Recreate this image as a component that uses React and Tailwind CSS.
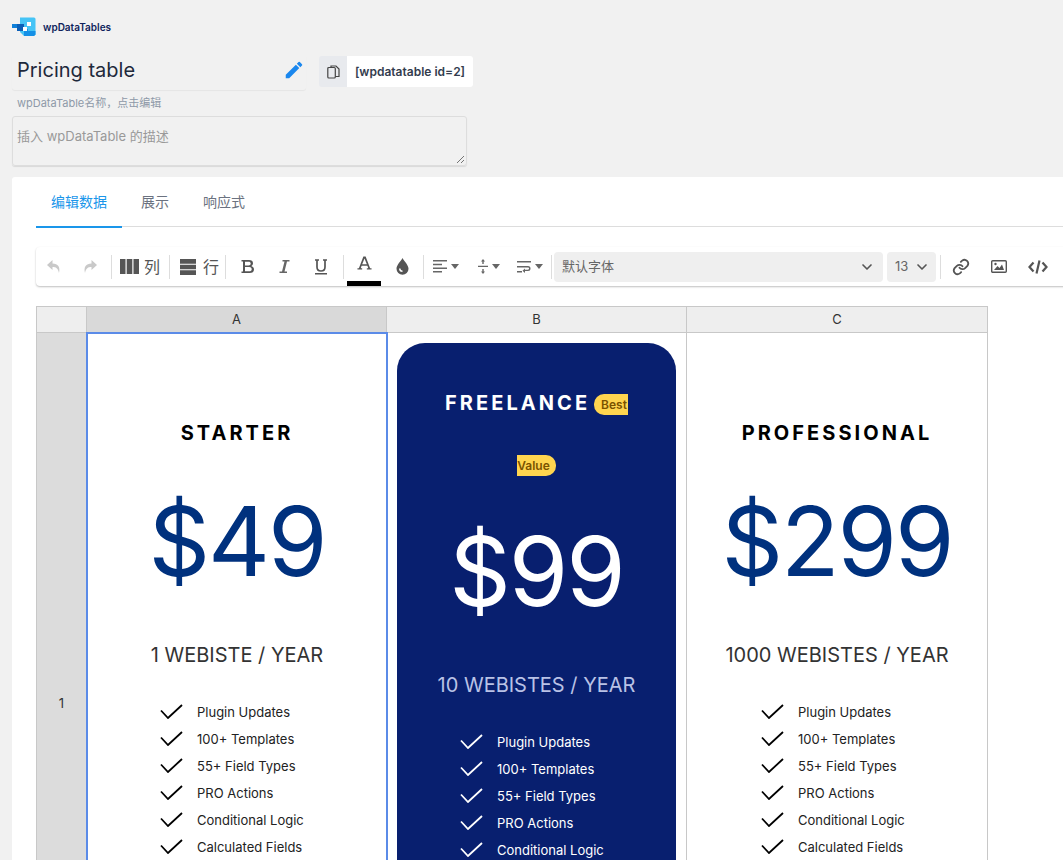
import { ChevronDown } from "lucide-react"
import { MdEdit } from "react-icons/md"

const features = ["Plugin Updates", "100+ Templates", "55+ Field Types", "PRO Actions", "Conditional Logic", "Calculated Fields"]

function Logo() {
  return (
    <svg width="24" height="20" viewBox="0 0 24 20">
      <path d="M9 0.500h13a1.500 1.500 0 0 1 1.500 1.500V17.500l-1.500 1.500H12L8 15V0.500z" fill="#45c4f6" />
      <path d="M12 12h4v2h7.500v3.500L22 19H12z" fill="#1590e6" />
      <rect x="0" y="7" width="10" height="4" fill="#0f7fd8" />
      <rect x="5" y="7" width="7" height="7" fill="#0b5fb8" />
      <rect x="15" y="5" width="4" height="4" fill="#fff" />
      <rect x="11" y="10" width="4" height="4" fill="#fff" />
    </svg>
  )
}

function Sep() {
  return <div className="w-px h-[24px] bg-[#dddddd] shrink-0" />
}

function Caret() {
  return <svg width="8" height="5" viewBox="0 0 8 5" className="ml-[4px]"><path d="M0 0h8L4 5z" fill="#666" /></svg>
}

function Toolbar() {
  return (
    <div className="h-[39px] flex items-center rounded-[4px] bg-white shadow-[0_1px_2px_rgba(0,0,0,0.25)] text-[#555] w-[1040px]">
      <button className="w-[35px] flex justify-center">
        <svg width="16" height="15" viewBox="0 0 16 15"><path d="M6.500 1 1 6l5.500 5V8c3.500 0 5.500 1 6.500 6 1.500-6-1-9.500-6.500-9.500z" fill="#c9c9c9" /></svg>
      </button>
      <button className="w-[37px] mr-[3px] flex justify-center">
        <svg width="16" height="15" viewBox="0 0 16 15"><path d="M9.500 1 15 6l-5.500 5V8C6 8 4 9 3 14 1.500 8 4 4.500 9.500 4.500z" fill="#c9c9c9" /></svg>
      </button>
      <Sep />
      <div className="flex items-center w-[57px] pl-[8px] gap-[5px]">
        <svg width="19" height="15" viewBox="0 0 19 15"><path d="M0 0h5.500v15H0zM6.700 0h5.600v15H6.700zM13.500 0H19v15h-5.500z" fill="#555" /></svg>
        <span className="text-[16px]">列</span>
      </div>
      <Sep />
      <div className="flex items-center w-[55px] pl-[10px] gap-[7px]">
        <svg width="16" height="16" viewBox="0 0 16 16"><path d="M0 0h16v4.800H0zM0 5.700h16v4.600H0zM0 11.200h16V16H0z" fill="#555" /></svg>
        <span className="text-[16px]">行</span>
      </div>
      <Sep />
      <div className="w-[43px] flex justify-center">
        <svg width="14" height="15" viewBox="0 0 14 15"><path fillRule="evenodd" d="M.5 1H8c2.500 0 4 1.200 4 3.200 0 1.400-.8 2.400-1.900 2.900 1.600.4 2.900 1.500 2.900 3.300 0 2.300-1.700 3.600-4.300 3.600H.5v-1.500H2v-10H.5zm3.500 1.700v3.700h3.500c1.300 0 2.200-.7 2.200-1.900S8.800 2.700 7.500 2.700zM4 8v4.300h4.200c1.500 0 2.500-.8 2.500-2.100S9.700 8 8.200 8z" fill="#555" /></svg>
      </div>
      <div className="w-[30px] flex justify-center">
        <svg width="12" height="15" viewBox="0 0 12 15"><path d="M4.500 1H11.500v1.500H9L6.500 12.500H9V14H1.500v-1.500H4L6.500 2.500H4.500z" fill="#666" /></svg>
      </div>
      <div className="w-[44px] flex justify-center">
        <svg width="14" height="16" viewBox="0 0 14 16"><path d="M3 1v7c0 2.400 1.600 4 4 4s4-1.600 4-4V1M1 1h4M9 1h4" stroke="#555" strokeWidth="1.700" fill="none" /><rect x="1" y="14" width="12" height="1.500" fill="#555" /></svg>
      </div>
      <Sep />
      <div className="relative w-[41px] h-full flex justify-center pt-[8px]">
        <svg width="15" height="16" viewBox="0 0 16 16"><path d="M.5 15v-1.500H2L6.800 1h2.400L14 13.500h1.500V15h-5v-1.500H12l-.9-2.500H4.900L4 13.500h1.500V15zM5.500 9.300h5L8 3.200z" fill="#555" /></svg>
        <div className="absolute left-[3px] bottom-0 w-[34px] h-[5px] bg-black" />
      </div>
      <div className="w-[35px] flex justify-center">
        <svg width="13" height="17" viewBox="0 0 13 17"><path d="M6.500 0C8 3 12.500 7 12.500 10.700a6 6 0 0 1-12 0C.5 7 5 3 6.500 0z" fill="#555" /><path d="M3 10.500a3.500 3.500 0 0 0 3.500 3.500v-1.500A2 2 0 0 1 4.500 10.500z" fill="#fff" /></svg>
      </div>
      <div className="ml-[3px]"><Sep /></div>
      <div className="w-[44px] flex items-center justify-center">
        <svg width="14" height="13" viewBox="0 0 14 13"><path d="M0 0h14v1.500H0zM0 3.700h9v1.500H0zM0 7.400h14v1.500H0zM0 11.100h9v1.500H0z" fill="#666" /></svg>
        <Caret />
      </div>
      <div className="w-[41px] flex items-center justify-center">
        <svg width="10" height="15" viewBox="0 0 10 15"><path d="M0 6.700h10v1.300H0zM5 0l2 2.500H5.700V5H4.300V2.500H3zM5 15l2-2.500H5.700V10H4.300v2.500H3z" fill="#666" /></svg>
        <Caret />
      </div>
      <div className="w-[42px] flex items-center justify-center">
        <svg width="14" height="12" viewBox="0 0 14 12"><path d="M0 0h14v1.500H0zM0 10h5v1.500H0zM0 5h11a2.500 2.500 0 0 1 0 5H8v2L5.500 9.700 8 7.500v1.200h3a1 1 0 0 0 0-2.200H0z" fill="#666" /></svg>
        <Caret />
      </div>
      <Sep />
      <div className="ml-[2px] w-[329px] h-[30px] rounded-[4px] bg-[#efefef] flex items-center justify-between pl-[8px] pr-[8px] text-[13px] text-[#666]">
        <span>默认字体</span>
        <ChevronDown size={16} strokeWidth={2.5} color="#555" />
      </div>
      <div className="ml-[4px] w-[49px] h-[30px] rounded-[4px] bg-[#efefef] flex items-center justify-between pl-[8px] pr-[6px] text-[13px] text-[#666]">
        <span>13</span>
        <ChevronDown size={16} strokeWidth={2.5} color="#555" />
      </div>
      <div className="ml-[4px]"><Sep /></div>
      <div className="w-[40px] flex justify-center">
        <svg width="18" height="18" viewBox="0 0 24 24" fill="none" stroke="#555" strokeWidth="2.400" strokeLinecap="round"><path d="M10 13a5 5 0 0 0 7.500.5l3-3a5 5 0 0 0-7-7l-1.700 1.700" /><path d="M14 11a5 5 0 0 0-7.500-.5l-3 3a5 5 0 0 0 7 7l1.700-1.700" /></svg>
      </div>
      <div className="w-[36px] flex justify-center">
        <svg width="16" height="13" viewBox="0 0 16 13"><rect x=".7" y=".7" width="14.600" height="11.600" rx="1" fill="none" stroke="#555" strokeWidth="1.400" /><path d="M3 10 6.500 6l2 2 2.500-3.500L13 10z" fill="#555" /><circle cx="4.500" cy="4" r="1.200" fill="#555" /></svg>
      </div>
      <div className="w-[42px] flex justify-center">
        <svg width="20" height="14" viewBox="0 0 20 14" fill="none" stroke="#555" strokeWidth="2.200"><path d="M5.500 2.500 1.500 7l4 4.500M14.500 2.500l4 4.500-4 4.500M11.500 0.500 8.500 13.500" /></svg>
      </div>
    </div>
  )
}

function Check({ color }) {
  return (
    <svg width="23" height="15" viewBox="0 0 23 15" className="shrink-0 -mt-[2px]" fill="none" stroke={color} strokeWidth="1.800">
      <path d="M1 6.500 8 14 22 1" />
    </svg>
  )
}

function Plan({ name, price, sites, dark, badge, wide }) {
  const text = dark ? "text-white" : "text-black"
  const items = dark ? features.slice(0, 5) : features
  return (
    <div className={`flex flex-col items-center ${text}`}>
      {badge ? (
        <div className="h-[138px] pt-[29px] w-full text-center text-[20px] leading-[62px]">
          <span className="font-bold tracking-[3.05px]">{name}</span>
          <span className="ml-[4px] bg-[#ffd54f] rounded-l-[10px] pl-[7px] pr-px py-[3px] text-[12px] leading-[14px] font-semibold text-[#7a5200] relative -top-[1px]">Best</span>
          <br />
          <span className="bg-[#ffd54f] rounded-r-[10px] pr-[6px] py-[3px] text-[12px] leading-[14px] font-semibold text-[#7a5200] relative -top-[2px]">Value</span>
        </div>
      ) : (
        <div className="h-[30px] mt-[88px] text-[20px] font-bold tracking-[3.05px] leading-[24px] text-center w-full">{name}</div>
      )}
      <div className={`mt-[32px] text-[96px] leading-[116px] tracking-[-2px] ${dark ? "text-white" : "text-[#00317e]"}`}>{price}</div>
      <div className={`mt-[44px] text-[20px] leading-[24px] ${dark ? "text-[#b9c2e6]" : "text-[#333]"}`}>{sites}</div>
      <ul className={`mt-[32px] self-start flex flex-col ${wide ? "pl-[74px]" : "pl-[73px]"}`}>
        {items.map(f => (
          <li key={f} className="flex items-center h-[27px] gap-[14px]">
            <Check color={dark ? "#fff" : "#000"} />
            <span className={`text-[13px] ${dark ? "text-white" : "text-[#222]"}`}>{f}</span>
          </li>
        ))}
      </ul>
    </div>
  )
}

export default function App() {
  return (
    <div className="h-[860px] overflow-hidden bg-[#f1f1f1] font-['Inter','Noto_Sans_CJK_SC',sans-serif] text-[#1e293b]">
      <div className="pt-[17px] pl-[12px] flex items-center gap-[7px] h-[37px]">
        <Logo />
        <span className="text-[10px] font-semibold text-[#0f1f5c]">wpDataTables</span>
      </div>
      <div className="flex items-start pl-[12px] mt-[17px]">
        <div className="w-[294px] h-[36px] rounded-[3px] shadow-[0_1px_1px_rgba(0,0,0,0.05)] flex items-center justify-between pl-[5px] pr-[1px] pb-[4px]">
          <span className="text-[20px] text-[#1e293b]">Pricing table</span>
          <MdEdit size={22} color="#1a87ee" />
        </div>
        <div className="ml-[13px] mt-[2px] w-[28px] h-[31px] bg-[#e8eaee] rounded-l-[3px] flex items-center justify-center">
          <svg width="13" height="14" viewBox="0 0 13 14" fill="none" stroke="#444" strokeWidth="1.200"><rect x=".8" y="2.500" width="7.500" height="10.500" rx="1" /><path d="M4 2.500V1h5l3 3v7.500H8.300" /></svg>
        </div>
        <div className="mt-[2px] w-[126px] h-[31px] bg-white rounded-r-[3px] flex items-center justify-center text-[12px] font-semibold text-[#333c4e]">[wpdatatable id=2]</div>
      </div>
      <div className="pl-[17px] mt-[6px] text-[11px] leading-[14px] text-[#8e99a8]">wpDataTable名称，点击编辑</div>
      <div className="ml-[12px] mt-[6px] w-[455px] h-[50px] border border-[#dddddd] rounded-[3px] shadow-[0_1px_1px_rgba(0,0,0,0.1)] pl-[4px] pt-[11px] text-[13px] leading-[16px] text-[#999] relative">
        插入 wpDataTable 的描述
        <svg width="9" height="9" viewBox="0 0 9 9" className="absolute right-[1px] bottom-[1px]" stroke="#555" strokeWidth="0.800"><path d="M1 8 8 1M5 8l3-3" /></svg>
      </div>
      <div className="ml-[12px] mt-[11px] bg-white rounded-tl-[3px] h-[700px] pl-[24px]">
        <div className="h-[50px] border-b border-[#dddddd] flex items-center text-[14px] text-[#6b7280] relative">
          <div className="relative w-[86px] h-[50px] flex items-center justify-center text-[#1a96ea]">
            编辑数据
            <div className="absolute left-0 right-0 -bottom-px h-[2px] bg-[#1a96ea]" />
          </div>
          <span className="ml-[19px]">展示</span>
          <span className="ml-[34px]">响应式</span>
        </div>
        <div className="mt-[20px]"><Toolbar /></div>
        <div className="mt-[20px] w-[952px] border-l border-t border-[#c8c8c8] grid grid-cols-[50px_300px_300px_301px] text-[13px] text-[#333]">
          <div className="h-[26px] bg-[#eeeeee] border-r border-b border-[#c8c8c8]" />
          <div className="h-[26px] bg-[#d9d9d9] border-r border-b border-[#c8c8c8] flex items-center justify-center">A</div>
          <div className="h-[26px] bg-[#eeeeee] border-r border-b border-[#c8c8c8] flex items-center justify-center">B</div>
          <div className="h-[26px] bg-[#eeeeee] border-r border-b border-[#c8c8c8] flex items-center justify-center">C</div>
          <div className="h-[741px] bg-[#dcdcdc] border-r border-[#c8c8c8] flex items-center justify-center">1</div>
          <div className="relative z-10 h-[741px] bg-white border-2 border-[#5b8be8] -ml-px -mt-px -mb-px w-[302px]">
            <div className="-mx-px -mt-px"><Plan name="STARTER" price="$49" sites="1 WEBISTE / YEAR" /></div>
          </div>
          <div className="h-[741px] bg-white border-r border-[#c8c8c8] px-[10px] pt-[10px]">
            <div className="bg-[#081f6f] h-[731px] rounded-[28px]">
              <div className="-mx-[10px]"><Plan name="FREELANCE" price="$99" sites="10 WEBISTES / YEAR" dark badge /></div>
            </div>
          </div>
          <div className="h-[741px] bg-white border-r border-[#c8c8c8]">
            <Plan name="PROFESSIONAL" price="$299" sites="1000 WEBISTES / YEAR" wide />
          </div>
        </div>
      </div>
    </div>
  )
}
